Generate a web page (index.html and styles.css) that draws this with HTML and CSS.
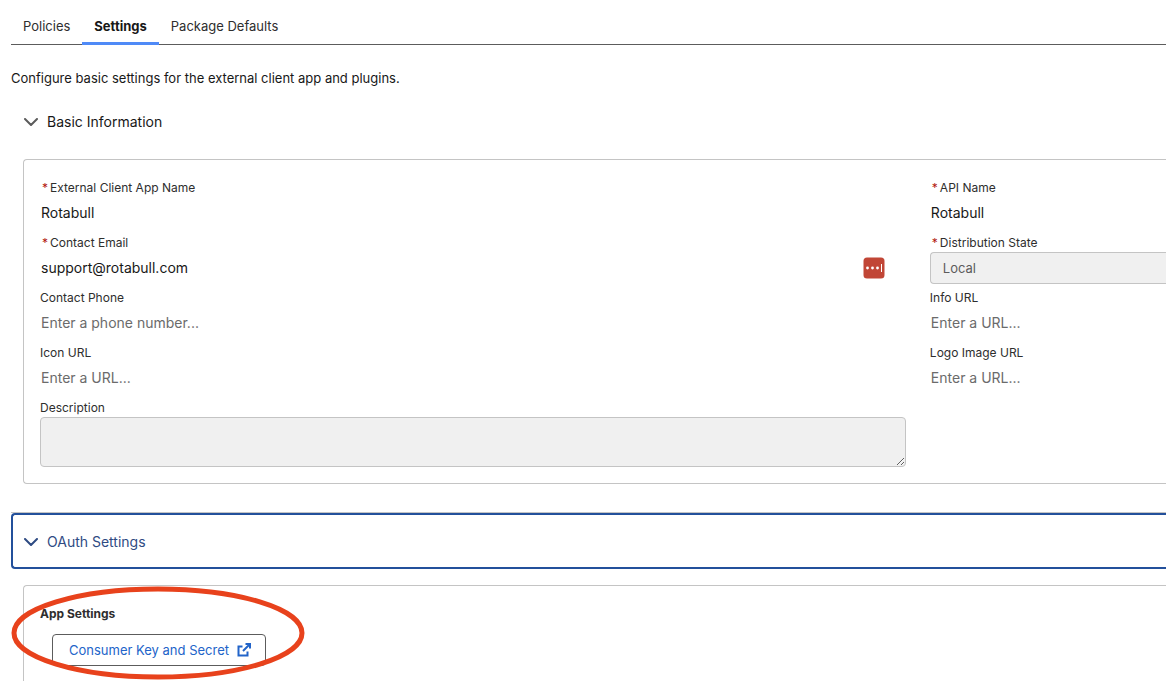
FILE: index.html
```html
<!DOCTYPE html>
<html lang="en">
<head>
    <meta charset="UTF-8">
    <meta name="viewport" content="width=device-width, initial-scale=1.0">
    <title>External Client App Settings</title>
    <link rel="stylesheet" href="styles.css">
</head>
<body>
<nav class="tabs">
    <a href="#policies">Policies</a>
    <a href="#settings" class="active">Settings</a>
    <a href="#defaults">Package Defaults</a>
</nav>

<main>
    <p class="intro">Configure basic settings for the external client app and plugins.</p>

    <button type="button" class="section-toggle">
        <svg class="chevron" viewBox="0 0 14 8"><path d="M1 1l6 6 6-6"/></svg>
        Basic Information
    </button>

    <form class="panel fields">
        <div class="field">
            <label for="appName"><span class="required">*</span>External Client App Name</label>
            <input type="text" id="appName" value="Rotabull">
        </div>
        <div class="field">
            <label for="apiName"><span class="required">*</span>API Name</label>
            <input type="text" id="apiName" value="Rotabull">
        </div>
        <div class="field">
            <label for="email"><span class="required">*</span>Contact Email</label>
            <div class="input-wrap">
                <input type="email" id="email" value="support@rotabull.com">
                <svg class="fill-icon" viewBox="0 0 22 22">
                    <rect x="0.5" y="0.5" width="21" height="21" rx="3.5" fill="#c14636"/>
                    <circle cx="4.5" cy="11" r="1.4"/>
                    <circle cx="9.5" cy="11" r="1.4"/>
                    <circle cx="14.5" cy="11" r="1.4"/>
                    <rect x="18" y="7" width="1" height="8"/>
                </svg>
            </div>
        </div>
        <div class="field">
            <label for="state"><span class="required">*</span>Distribution State</label>
            <select id="state" disabled>
                <option>Local</option>
            </select>
        </div>
        <div class="field">
            <label for="phone">Contact Phone</label>
            <input type="tel" id="phone" placeholder="Enter a phone number...">
        </div>
        <div class="field">
            <label for="infoUrl">Info URL</label>
            <input type="url" id="infoUrl" placeholder="Enter a URL...">
        </div>
        <div class="field">
            <label for="iconUrl">Icon URL</label>
            <input type="url" id="iconUrl" placeholder="Enter a URL...">
        </div>
        <div class="field">
            <label for="logoUrl">Logo Image URL</label>
            <input type="url" id="logoUrl" placeholder="Enter a URL...">
        </div>
        <div class="field">
            <label for="description">Description</label>
            <textarea id="description" readonly></textarea>
        </div>
    </form>

    <div class="section-divider">
        <button type="button" class="section-toggle focused">
            <svg class="chevron" viewBox="0 0 14 8"><path d="M1 1l6 6 6-6"/></svg>
            OAuth Settings
        </button>
    </div>

    <section class="panel app-settings">
        <h2>App Settings</h2>
        <button type="button" class="key-button">
            Consumer Key and Secret
            <svg class="open-icon" viewBox="0 0 14 14">
                <path d="M5.500 3.500H1.500v9h9V8.500M8.500 1H13v4.500M13 1L6 8"/>
            </svg>
        </button>
        <!-- callout around the key button -->
        <svg class="callout" viewBox="0 0 294 94">
            <ellipse cx="147" cy="47" rx="144" ry="44"/>
        </svg>
    </section>
</main>
</body>
</html>
```

FILE: styles.css
```css
body {
    margin: 0;
    padding-left: 11px;
    font-family: Inter, "Liberation Sans", sans-serif;
    font-size: 13px;
    line-height: 18px;
    color: #181818;
    background-color: #fff;
}

button, input, select, textarea {
    font-family: inherit;
    box-sizing: border-box;
}

.tabs {
    display: flex;
    height: 44px;
    border-bottom: 1px solid #5c5c5c;
}

.tabs a {
    height: 45px;
    padding: 0 12px;
    box-sizing: border-box;
    line-height: 52px;
    color: #2e2e2e;
    text-decoration: none;
}

.tabs a.active {
    font-weight: bold;
    color: #181818;
    border-bottom: 3px solid #4f8af7;
}

.intro {
    margin: 24px 0 25px;
}

.section-toggle {
    display: flex;
    align-items: center;
    gap: 9px;
    width: 100%;
    padding: 0 13px;
    border: none;
    background: none;
    font-size: 14px;
    line-height: 20px;
    color: #181818;
    cursor: pointer;
}

.chevron {
    width: 14px;
    height: 8px;
    fill: none;
    stroke: #5c5c5c;
    stroke-width: 2;
    stroke-linecap: round;
    stroke-linejoin: round;
}

/* panels run off to the right edge */
.panel {
    margin-left: 12px;
    border: 1px solid #c4c4c4;
    border-right: none;
    border-radius: 4px 0 0 4px;
}

.fields {
    display: grid;
    grid-template-columns: 11fr 3fr;
    gap: 5px 24px;
    margin-top: 27px;
    padding: 19px 0 16px 16px;
}

.field {
    min-width: 0;
}

.field label {
    display: block;
    font-size: 12px;
    line-height: 18px;
    color: #2e2e2e;
}

.required {
    margin: 0 2px;
    color: #b3180f;
}

.field input {
    display: block;
    width: 100%;
    height: 32px;
    padding: 0 1px 2px;
    border: none;
    background: none;
    font-size: 14px;
    color: #181818;
}

.field input::placeholder {
    color: #6b6b6b;
}

.input-wrap {
    position: relative;
}

.fill-icon {
    position: absolute;
    top: 5px;
    right: 21px;
    width: 22px;
    height: 22px;
    fill: #fff;
}

.field select, .field textarea {
    display: block;
    width: 100%;
    border: 1px solid #c4c4c4;
    background-color: #f0f0f0;
}

.field select {
    height: 32px;
    padding: 0 12px;
    border-right: none;
    border-radius: 4px 0 0 4px;
    appearance: none;
    font-size: 13px;
    color: #5c5c5c;
    opacity: 1;
}

.field textarea {
    height: 50px;
    border-radius: 4px;
    resize: vertical;
}

.section-divider {
    margin-top: 28px;
    border-top: 1px solid #c4c4c4;
}

.section-toggle.focused {
    height: 56px;
    padding: 2px 11px 0;
    border: 2px solid #23509b;
    border-right: none;
    border-radius: 4px 0 0 4px;
    color: #2f4b83;
}

.focused .chevron {
    stroke: #2f4b83;
}

.app-settings {
    position: relative;
    margin-top: 16px;
    padding: 19px 16px 16px;
    border-bottom: none;
    border-bottom-left-radius: 0;
}

.app-settings h2 {
    margin: 0 0 11px;
    font-size: 12px;
    line-height: 18px;
    color: #2e2e2e;
}

.key-button {
    display: flex;
    align-items: center;
    gap: 8px;
    height: 32px;
    margin-left: 12px;
    padding: 0 14px 0 16px;
    border: 1px solid #5c5c5c;
    border-radius: 4px;
    background-color: #fff;
    font-size: 13px;
    color: #2264c9;
    cursor: pointer;
}

.open-icon {
    width: 14px;
    height: 14px;
    fill: none;
    stroke: #2264c9;
    stroke-width: 2;
}

.callout {
    position: absolute;
    top: 0;
    left: -13px;
    width: 294px;
    height: 94px;
    fill: none;
    stroke: #e8421c;
    stroke-width: 5;
    pointer-events: none;
}
```
